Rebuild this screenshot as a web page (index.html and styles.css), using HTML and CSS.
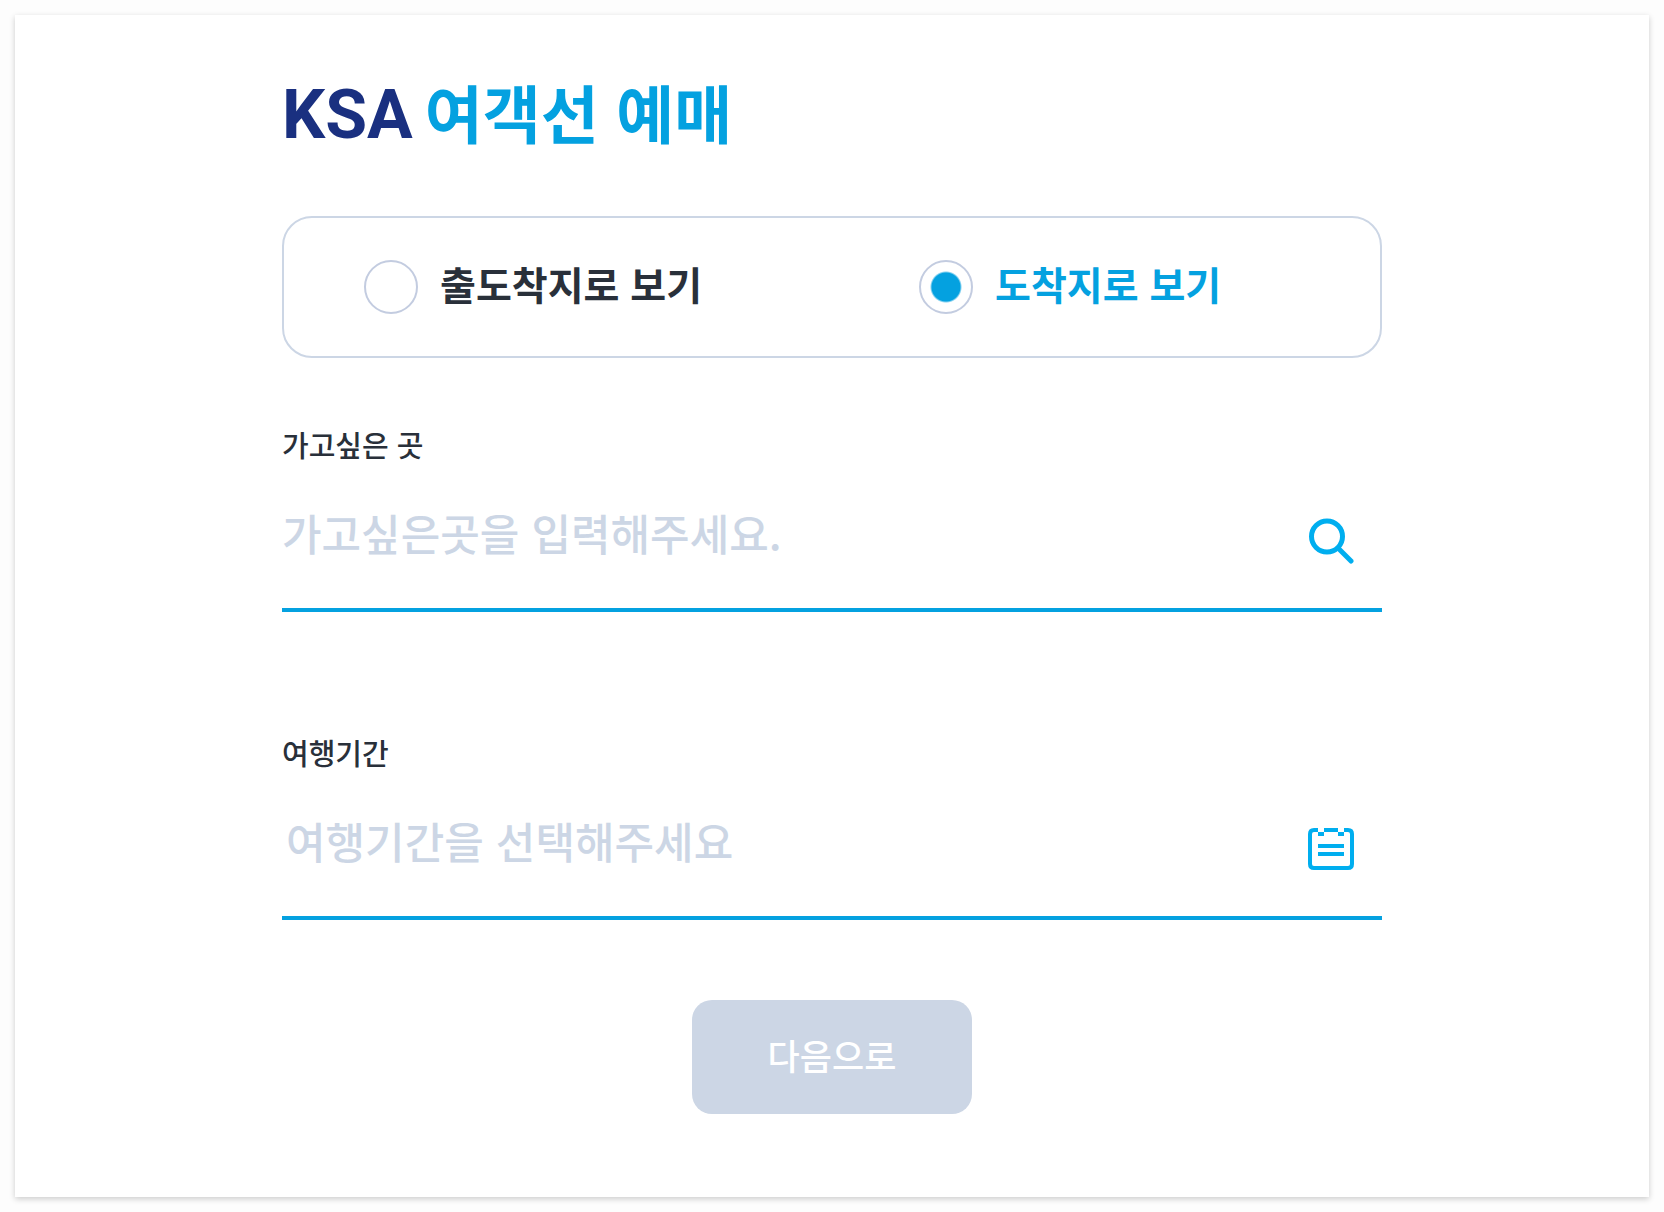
FILE: index.html
```html
<!DOCTYPE html>
<html lang="ko">
<head>
<meta charset="utf-8">
<meta name="viewport" content="width=device-width, initial-scale=1">
<title>KSA 여객선 예매</title>
<link rel="stylesheet" href="styles.css">
</head>
<body>
<main class="card">
  <form class="booking">
    <h1 class="title"><span class="brand">KSA</span> <span>여객선 예매</span></h1>

    <div class="modes" role="radiogroup" aria-label="보기 방식">
      <label class="mode"><input class="mode-input" type="radio" name="mode"><span class="mode-text">출도착지로 보기</span></label>
      <label class="mode"><input class="mode-input" type="radio" name="mode" checked><span class="mode-text">도착지로 보기</span></label>
    </div>

    <div class="field">
      <label class="field-label" for="place">가고싶은 곳</label>
      <div class="field-row">
        <input class="field-input" id="place" type="text" placeholder="가고싶은곳을 입력해주세요.">
        <button class="icon-button" type="button" aria-label="검색">
          <svg class="icon" viewBox="0 0 46 46" fill="none" stroke="currentColor" stroke-width="5" stroke-linecap="round">
            <circle cx="19" cy="18.500" r="15.500"/>
            <path d="M30.500 30.500 43 43"/>
          </svg>
        </button>
      </div>
    </div>

    <div class="field">
      <label class="field-label" for="period">여행기간</label>
      <div class="field-row">
        <input class="field-input field-input-period" id="period" type="text" placeholder="여행기간을 선택해주세요">
        <button class="icon-button" type="button" aria-label="달력">
          <svg class="icon" viewBox="0 0 46 46" fill="none" stroke="currentColor" stroke-width="4">
            <path d="M10 4H6Q2 4 2 8V38Q2 42 6 42H40Q44 42 44 38V8Q44 4 40 4H36M16 4H30"/>
            <path d="M10 8H16M30 8H36M10 20H36M10 28H36"/>
          </svg>
        </button>
      </div>
    </div>

    <button class="next" type="submit">다음으로</button>
  </form>
</main>
</body>
</html>
```
FILE: styles.css
```css
* {
  box-sizing: border-box;
}

body {
  margin: 0;
  padding: 15px;
  background: #fdfdfd;
  color: #29303a;
  font-family: "Noto Sans CJK KR", "Noto Sans", sans-serif;
}

button,
input {
  margin: 0;
  padding: 0;
  border: 0;
  background: none;
  font-family: inherit;
}

.card {
  padding: 48px 32px 83px;
  background: #fff;
  box-shadow: 0 2px 6px rgba(0, 0, 0, 0.2);
}

.booking {
  display: flex;
  flex-direction: column;
  max-width: 1100px;
  margin: 0 auto;
}

.title {
  display: flex;
  align-items: baseline;
  gap: 12px;
  height: 96px;
  margin: 0 0 57px;
  color: #04a1e0;
  font-size: 63px;
  font-weight: 700;
  line-height: 96px;
}

.brand {
  color: #1a3080;
  font-family: Roboto, sans-serif;
  font-size: 68px;
}

.modes {
  display: grid;
  grid-template-columns: 1fr 1fr;
  gap: 94px;
  height: 142px;
  padding-left: 80px;
  margin-bottom: 66px;
  border: 2px solid #ccd6e5;
  border-radius: 30px;
}

.mode {
  display: flex;
  align-items: center;
  gap: 22px;
  font-size: 39px;
  font-weight: 700;
  line-height: 56px;
}

.mode-text {
  padding-bottom: 8px;
}

.mode-input {
  flex: none;
  width: 54px;
  height: 54px;
  border: 2px solid #c3cce0;
  border-radius: 50%;
  appearance: none;
}

.mode-input:checked {
  background: radial-gradient(circle, #04a1e0 14px, transparent 16px);
}

.mode-input:checked + .mode-text {
  color: #04a1e0;
}

.field {
  display: flex;
  flex-direction: column;
  margin-bottom: 120px;
}

.field-label {
  font-size: 29px;
  font-weight: 500;
  line-height: 40px;
}

.field-row {
  display: flex;
  align-items: center;
  height: 148px;
  padding-right: 28px;
  border-bottom: 4px solid #04a1e0;
}

.field-input {
  flex: 1;
  min-width: 0;
  height: 72px;
  padding-bottom: 8px;
  color: #29303a;
  font-size: 43px;
  font-weight: 500;
  outline: none;
}

.field-input-period {
  padding-left: 4px;
}

.field-input::placeholder {
  color: #ccd6e5;
  opacity: 1;
}

.icon-button {
  display: flex;
  padding-top: 10px;
  color: #00aeef;
}

.icon {
  width: 46px;
  height: 46px;
}

.next {
  align-self: center;
  width: 280px;
  height: 114px;
  padding-bottom: 6px;
  border-radius: 20px;
  background: #ccd6e5;
  color: #fff;
  font-size: 35px;
  font-weight: 500;
}

.field:last-of-type {
  margin-bottom: 80px;
}
```
